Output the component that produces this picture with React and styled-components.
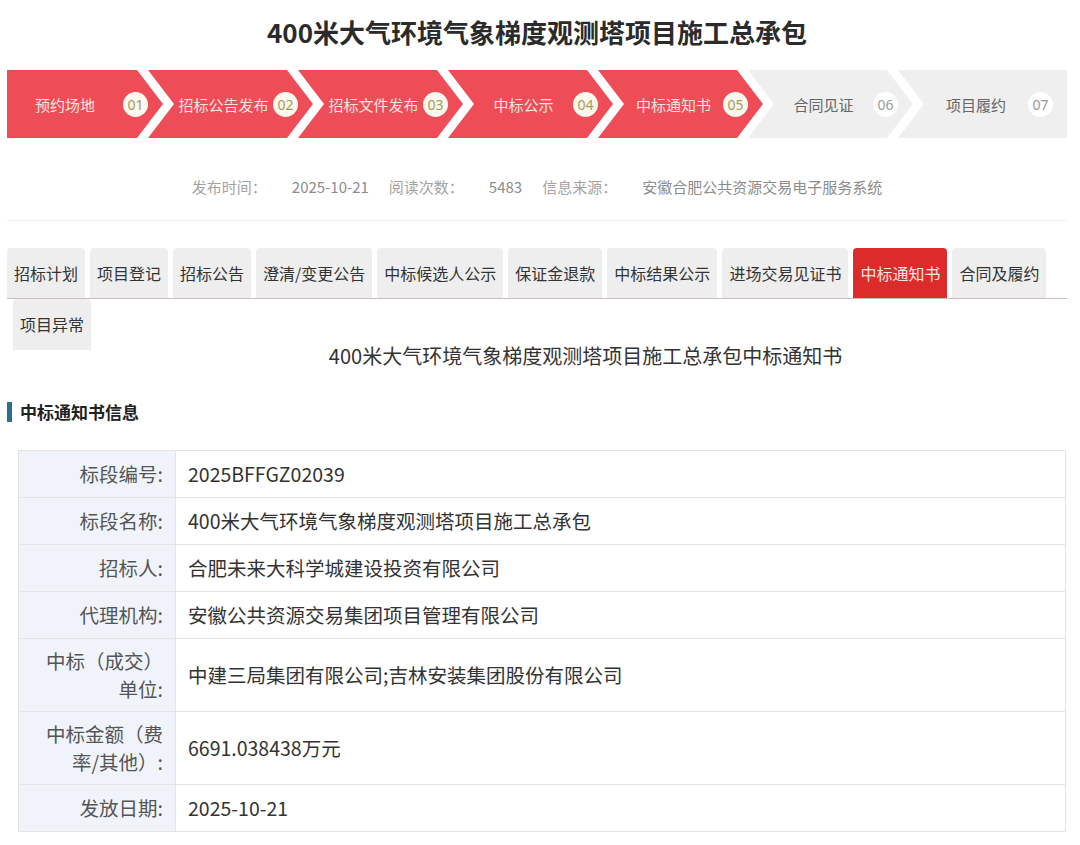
import React from 'react';
import styled, { createGlobalStyle } from 'styled-components';

const GlobalStyle = createGlobalStyle`
    body {
        margin: 0;
        background: #fff;
        font-family: "Noto Sans CJK SC", "Noto Sans", sans-serif;
        color: #333;
    }
`;

const Page = styled.div`
    width: 1080px;
    box-sizing: border-box;
    padding: 0 13px 20px 7px;
`;

const Title = styled.h1`
    margin: 0;
    padding-top: 12px;
    font-size: 26px;
    line-height: 40px;
    font-weight: 700;
    text-align: center;
    color: #2b2b2b;
`;

const StepBar = styled.div`
    display: flex;
    height: 68px;
    margin-top: 18px;
`;

const clipFor = ({ $first, $last }) => {
    if ($first) return 'polygon(0 0, calc(100% - 26px) 0, 100% 50%, calc(100% - 26px) 100%, 0 100%)';
    if ($last) return 'polygon(0 0, 100% 0, 100% 100%, 0 100%, 26px 50%)';
    return 'polygon(0 0, calc(100% - 26px) 0, 100% 50%, calc(100% - 26px) 100%, 0 100%, 26px 50%)';
};

const Step = styled.div`
    flex: ${props => (props.$last ? '1 1 auto' : `0 0 ${props.$first ? 156 : 165}px`)};
    margin-left: ${props => (props.$first ? 0 : -15)}px;
    display: flex;
    align-items: center;
    box-sizing: border-box;
    padding: 0 ${props => (props.$last ? 14 : 15)}px 0 ${props => (props.$first ? 0 : 26)}px;
    background: ${props => (props.$done ? '#ee4d58' : '#efefef')};
    clip-path: ${clipFor};
`;

const StepLabel = styled.span`
    flex: 1;
    text-align: center;
    font-size: 15px;
    white-space: nowrap;
    color: ${props => (props.$done ? '#fbe4e0' : '#666')};
`;

const StepNum = styled.span`
    flex: 0 0 25px;
    height: 25px;
    border-radius: 50%;
    display: flex;
    align-items: center;
    justify-content: center;
    font-family: "Noto Sans", sans-serif;
    font-size: 14px;
    background: ${props => (props.$done ? '#fdf9ee' : '#fff')};
    color: ${props => (props.$done ? '#a39c5c' : '#9a9a9a')};
`;

const Meta = styled.div`
    display: flex;
    justify-content: center;
    gap: 20px;
    padding: 39px 0 23px;
    font-size: 15px;
    line-height: 20px;
    border-bottom: 1px solid #eeeeee;
`;

const MetaItem = styled.span`
    display: flex;
    gap: 25px;
    color: #a3a3a3;
`;

const MetaValue = styled.span`
    color: #8c8c8c;
`;

const TabBar = styled.div`
    display: flex;
    flex-wrap: wrap;
    column-gap: 5px;
    margin-top: 27px;
    border-bottom: 1px solid #ccbcbc;
`;

const Tab = styled.div`
    height: ${props => props.$h || 50}px;
    line-height: ${props => props.$h || 50}px;
    padding: 0 7px;
    margin-left: ${props => props.$indent || 0}px;
    border-radius: 4px 4px 0 0;
    font-size: 16px;
    white-space: nowrap;
    background: ${props => (props.$active ? '#dc2b2b' : '#eeeeee')};
    color: ${props => (props.$active ? '#fde2e2' : '#333')};
`;

const SubRow = styled.div`
    display: flex;
    align-items: flex-start;
`;

const NoticeHeading = styled.h2`
    flex: 1;
    margin: 42px -13px 0 0;
    font-size: 20px;
    line-height: 30px;
    font-weight: 400;
    text-align: center;
    color: #333;
`;

const SectionHead = styled.div`
    display: flex;
    align-items: center;
    gap: 8px;
    margin-top: 29px;
    font-size: 17px;
    line-height: 24px;
    font-weight: 700;
    color: #222;

    &::before {
        content: '';
        width: 5px;
        height: 20px;
        background: #2d6e95;
    }
`;

const InfoTable = styled.table`
    margin: 26px 1px 0 11px;
    width: calc(100% - 12px);
    border-collapse: collapse;
    border: 1px solid #e4e4e4;
    font-size: 19.5px;
    line-height: 28px;
`;

const LabelCell = styled.td`
    width: 157px;
    box-sizing: border-box;
    height: 47px;
    padding: 8px 12px 8px 22px;
    background: #f0f4fa;
    text-align: right;
    color: #555;
    border: 1px solid #e4e4e4;
`;

const ValueCell = styled.td`
    height: 47px;
    box-sizing: border-box;
    padding: 8px 12px;
    color: #333;
    border: 1px solid #e4e4e4;
`;

const steps = [
    { label: '预约场地', done: true },
    { label: '招标公告发布', done: true },
    { label: '招标文件发布', done: true },
    { label: '中标公示', done: true },
    { label: '中标通知书', done: true },
    { label: '合同见证', done: false },
    { label: '项目履约', done: false },
];

const tabs = [
    '招标计划',
    '项目登记',
    '招标公告',
    '澄清/变更公告',
    '中标候选人公示',
    '保证金退款',
    '中标结果公示',
    '进场交易见证书',
    '中标通知书',
    '合同及履约',
];

const rows = [
    ['标段编号:', '2025BFFGZ02039'],
    ['标段名称:', '400米大气环境气象梯度观测塔项目施工总承包'],
    ['招标人:', '合肥未来大科学城建设投资有限公司'],
    ['代理机构:', '安徽公共资源交易集团项目管理有限公司'],
    ['中标（成交）单位:', '中建三局集团有限公司;吉林安装集团股份有限公司'],
    ['中标金额（费率/其他）:', '6691.038438万元'],
    ['发放日期:', '2025-10-21'],
];

export default function App() {
    return (
        <Page>
            <GlobalStyle />
            <Title>400米大气环境气象梯度观测塔项目施工总承包</Title>

            <StepBar>
                {steps.map((s, i) => (
                    <Step key={s.label} $first={i === 0} $last={i === steps.length - 1} $done={s.done}>
                        <StepLabel $done={s.done}>{s.label}</StepLabel>
                        <StepNum $done={s.done}>{`0${i + 1}`}</StepNum>
                    </Step>
                ))}
            </StepBar>

            <Meta>
                <MetaItem>
                    发布时间：<MetaValue>2025-10-21</MetaValue>
                </MetaItem>
                <MetaItem>
                    阅读次数：<MetaValue>5483</MetaValue>
                </MetaItem>
                <MetaItem>
                    信息来源：<MetaValue>安徽合肥公共资源交易电子服务系统</MetaValue>
                </MetaItem>
            </Meta>

            <TabBar>
                {tabs.map(t => (
                    <Tab key={t} $active={t === '中标通知书'}>
                        {t}
                    </Tab>
                ))}
            </TabBar>
            <SubRow>
                <Tab $indent={6} $h={51}>
                    项目异常
                </Tab>
                <NoticeHeading>400米大气环境气象梯度观测塔项目施工总承包中标通知书</NoticeHeading>
            </SubRow>

            <SectionHead>中标通知书信息</SectionHead>

            <InfoTable>
                <tbody>
                    {rows.map(([k, v]) => (
                        <tr key={k}>
                            <LabelCell>{k}</LabelCell>
                            <ValueCell>{v}</ValueCell>
                        </tr>
                    ))}
                </tbody>
            </InfoTable>
        </Page>
    );
}
